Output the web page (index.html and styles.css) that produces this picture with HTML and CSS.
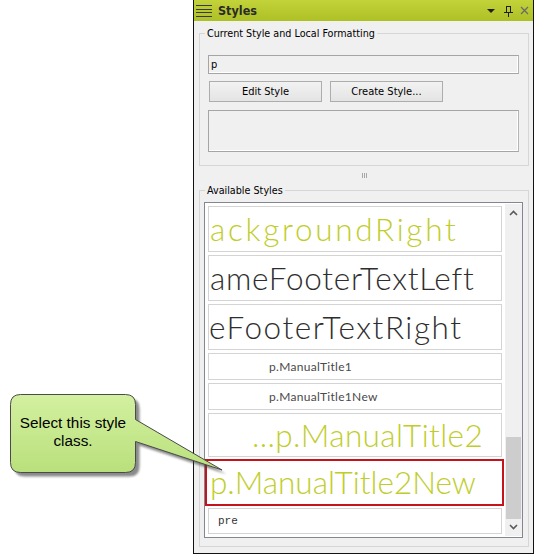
FILE: index.html
```html
<!DOCTYPE html>
<html>
<head>
<meta charset="utf-8">
<title>Styles</title>
<link rel="stylesheet" href="styles.css">
</head>
<body>
<div class="panel">
  <div class="titlebar">
    <svg class="menu-icon" width="16" height="21" viewBox="0 0 16 21">
      <rect x="0" y="5" width="16" height="1" fill="#3a3a3a"/>
      <rect x="0" y="9" width="16" height="1" fill="#3a3a3a"/>
      <rect x="0" y="12" width="16" height="1" fill="#3a3a3a"/>
      <rect x="0" y="16" width="16" height="1" fill="#3a3a3a"/>
    </svg>
    <span class="title">Styles</span>
    <svg class="tools" width="43" height="21" viewBox="0 0 43 21">
      <polygon points="0,9 8,9 4,13" fill="#1e1e1e"/>
      <path d="M19.5,6 V12.5 M23.5,6 V12.5 M19.5,6.5 H23.5 M17,12.5 H26 M21.5,12.5 V17" stroke="#1e1e1e" stroke-width="1" fill="none"/>
      <path d="M34,7 L41,14 M41,7 L34,14" stroke="#6a6a6a" stroke-width="1.3" fill="none"/>
    </svg>
  </div>
  <div class="content">
    <fieldset class="group group-current">
      <legend>Current Style and Local Formatting</legend>
      <div class="field">p</div>
      <div class="buttons">
        <button class="btn" type="button">Edit Style</button>
        <button class="btn" type="button">Create Style...</button>
      </div>
      <div class="field field-box"></div>
    </fieldset>
    <div class="splitter"><span></span><span></span><span></span></div>
    <fieldset class="group group-available">
      <legend>Available Styles</legend>
      <div class="listbox">
        <div class="items">
          <div class="item item-big green i1">ackgroundRight</div>
          <div class="item item-big dark i2">ameFooterTextLeft</div>
          <div class="item item-big dark i3">eFooterTextRight</div>
          <div class="item item-small">p.ManualTitle1</div>
          <div class="item item-small">p.ManualTitle1New</div>
          <div class="item item-mid green i6">...p.ManualTitle2</div>
          <div class="item item-mid green selected">p.ManualTitle2New</div>
          <div class="item item-pre">pre</div>
        </div>
        <div class="scrollbar">
          <svg class="sb-btn" width="17" height="17" viewBox="0 0 17 17"><polyline points="5,11 8.5,7.5 12,11" fill="none" stroke="#5a5a5a" stroke-width="1.6"/></svg>
          <div class="sb-track"><div class="sb-thumb"></div></div>
          <svg class="sb-btn" width="17" height="17" viewBox="0 0 17 17"><polyline points="5,6 8.5,9.5 12,6" fill="none" stroke="#5a5a5a" stroke-width="1.6"/></svg>
        </div>
      </div>
    </fieldset>
  </div>
</div>

<div class="callout">
  <svg class="callout-shape" width="240" height="110" viewBox="0 0 240 110">
    <defs>
      <linearGradient id="cg" x1="0" y1="0" x2="0" y2="1">
        <stop offset="0" stop-color="#d3f0a0"/>
        <stop offset="1" stop-color="#b9e07c"/>
      </linearGradient>
      <filter id="blur" x="-10%" y="-10%" width="130%" height="130%">
        <feGaussianBlur stdDeviation="1.2"/>
      </filter>
    </defs>
    <path transform="translate(4,4)" filter="url(#blur)" fill="#3c3c3c" opacity="0.6"
      d="M20.5,14.5 H125.5 Q135.5,14.5 135.5,24.5 V39.5 L222,90 L135.5,61.5 V82.5 Q135.5,92.5 125.5,92.5 H20.5 Q10.5,92.5 10.5,82.5 V24.5 Q10.5,14.5 20.5,14.5 Z"/>
    <path fill="url(#cg)" stroke="#4a4a4a" stroke-width="1"
      d="M20.5,14.5 H125.5 Q135.5,14.5 135.5,24.5 V39.5 L222,90 L135.5,61.5 V82.5 Q135.5,92.5 125.5,92.5 H20.5 Q10.5,92.5 10.5,82.5 V24.5 Q10.5,14.5 20.5,14.5 Z"/>
  </svg>
  <div class="callout-text">Select this style<br>class.</div>
</div>
</body>
</html>
```
FILE: styles.css
```css
* { box-sizing: border-box; }
html, body { margin: 0; padding: 0; }
body {
  width: 535px;
  height: 555px;
  background: #fff;
  position: relative;
  overflow: hidden;
  font-family: "DejaVu Sans Condensed", "DejaVu Sans", sans-serif;
  font-stretch: condensed;
  font-size: 11px;
  color: #000;
}

.panel {
  margin-left: 193px;
  width: 341px;
  height: 554px;
  border: 1px solid #111;
  border-top: 0;
  background: #f0f0f0;
  display: flex;
  flex-direction: column;
}

.titlebar {
  height: 21px;
  flex: none;
  display: flex;
  align-items: center;
  padding: 0 3px 0 2px;
  background: linear-gradient(#c3d33a, #adc024);
}
.menu-icon { display: block; margin-right: 6px; }
.title {
  flex: 1;
  font-weight: bold;
  font-size: 12.5px;
  color: #2a2a2a;
}
.tools { display: block; }

.content {
  flex: 1;
  display: flex;
  flex-direction: column;
  padding: 6px 4px 6px 5px;
  min-height: 0;
}

.group {
  margin: 0;
  border: 1px solid #d6d6d6;
  min-width: 0;
}
.group legend {
  padding: 0 2px;
  margin-left: -3px;
  font-size: 10.7px;
  line-height: 13px;
  color: #000;
}
.group-current { padding: 15px 9px 13px 8px; flex: none; }

.field {
  height: 19px;
  border: 1px solid #a5a5a5;
  border-right-color: #b5b5b5;
  background: #f0f0f0;
  box-shadow: inset -1px -1px 0 #fff;
  padding: 0 2px;
  font-size: 11px;
  line-height: 17px;
  color: #000;
}
.field-box { height: 42px; margin-top: 8px; }

.buttons {
  display: flex;
  gap: 8px;
  margin-top: 7px;
  padding-left: 1px;
}
.btn {
  width: 113px;
  height: 21px;
  margin: 0;
  padding: 0;
  border: 1px solid #adadad;
  background: linear-gradient(#f2f2f2, #e4e4e4);
  font-family: inherit;
  font-stretch: condensed;
  font-size: 11px;
  color: #000;
}

.splitter {
  height: 18px;
  flex: none;
  display: flex;
  justify-content: center;
  align-items: center;
  gap: 1px;
  padding-left: 1px;
}
.splitter span {
  width: 1px;
  height: 5px;
  background: #a8a8a8;
}

.group-available {
  flex: 1;
  min-height: 0;
  display: flex;
  flex-direction: column;
  padding: 5px 5px 8px 4px;
}
.group-available legend { margin-left: 1px; }

.listbox {
  flex: 1;
  min-height: 0;
  border: 1px solid #828790;
  background: #fff;
  display: flex;
}
.items {
  flex: 1;
  min-width: 0;
  padding: 3px 3px 0 3px;
  display: flex;
  flex-direction: column;
  gap: 3px;
  overflow: hidden;
}
.item {
  flex: none;
  background: #fff;
  border: 1px solid #d4d4d4;
  overflow: hidden;
  white-space: nowrap;
}
.item-big {
  height: 46px;
  font-family: Lato, "Open Sans", sans-serif;
  font-weight: 300;
  font-size: 31.5px;
  line-height: 44px;
}
.item-mid {
  height: 44px;
  font-family: Lato, "Open Sans", sans-serif;
  font-weight: 300;
  font-size: 31.5px;
  line-height: 42px;
}
.green { color: #bfcd2b; }
.dark { color: #2e2e2e; }
.i1 { padding-left: 1px; letter-spacing: 2.7px; }
.i2 { padding-left: 1px; letter-spacing: 0.75px; }
.i3 { padding-left: 0; letter-spacing: 1.55px; }
.i6 { padding-left: 43px; letter-spacing: 0.4px; }
.selected {
  height: 47px;
  margin: -1px -2px -1px -3px;
  border: 2px solid #c5121b;
  padding-left: 3px;
}
.item-small {
  height: 27px;
  font-family: Lato, "Open Sans", sans-serif;
  font-size: 12px;
  line-height: 25px;
  padding-left: 60px;
  color: #4a4a4a;
  letter-spacing: 0.3px;
}
.item-pre {
  height: 26px;
  font-family: "Liberation Mono", "DejaVu Sans Mono", monospace;
  font-size: 11px;
  line-height: 24px;
  padding-left: 9px;
  color: #333;
}

.scrollbar {
  width: 17px;
  flex: none;
  background: #f0f0f0;
  display: flex;
  flex-direction: column;
  margin: 1px 0;
}
.sb-btn { display: block; flex: none; }
.sb-track {
  flex: 1;
  display: flex;
  flex-direction: column;
  justify-content: flex-end;
}
.sb-thumb {
  height: 82px;
  margin: 0 1px;
  background: #cdcdcd;
}

.callout {
  position: absolute;
  left: 0;
  top: 380px;
  width: 240px;
  height: 110px;
  z-index: 2;
  pointer-events: none;
}
.callout-shape { position: absolute; left: 0; top: 0; display: block; }
.callout-text {
  position: absolute;
  left: 10px;
  top: 14px;
  width: 126px;
  padding-top: 20px;
  text-align: center;
  font-family: "Liberation Sans", Arial, sans-serif;
  font-stretch: normal;
  font-size: 15.3px;
  line-height: 18px;
  color: #000;
}
```
